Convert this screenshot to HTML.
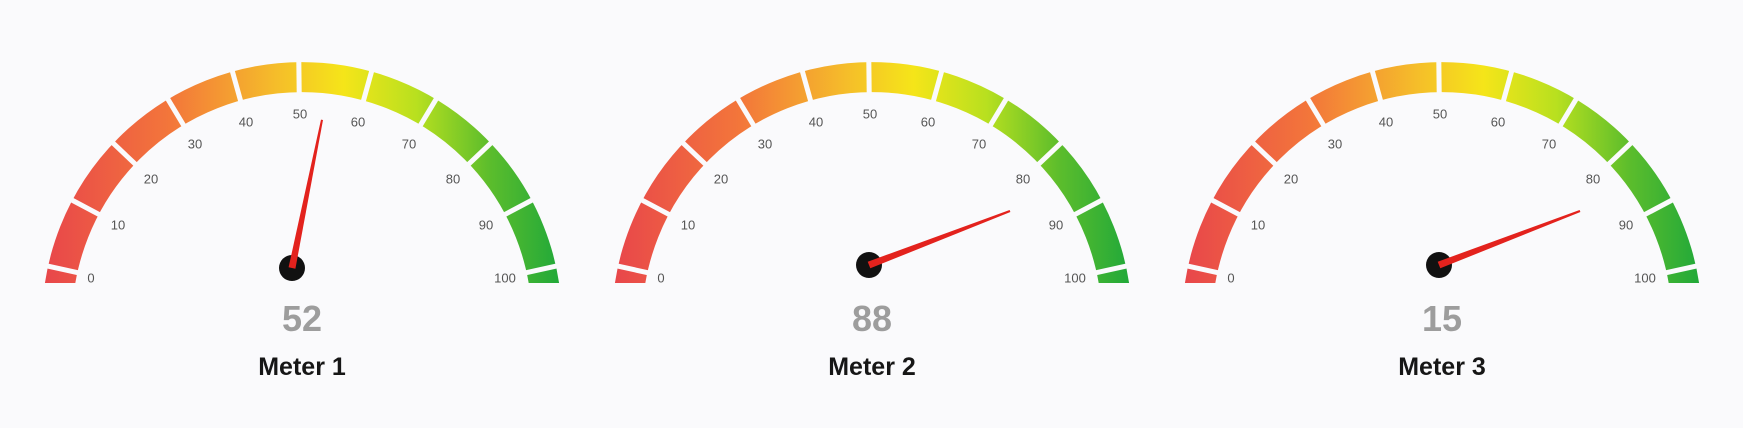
<!DOCTYPE html>
<html><head><meta charset="utf-8"><style>
html,body{margin:0;padding:0;background:#fafafc;}
svg{display:block;}
</style></head><body>
<svg width="1743" height="428" viewBox="0 0 1743 428" xmlns="http://www.w3.org/2000/svg" font-family="Liberation Sans, sans-serif">
<defs>
<linearGradient id="gr" gradientUnits="userSpaceOnUse" x1="-260" y1="0" x2="260" y2="0">
<stop offset="0" stop-color="#e8454b"/>
<stop offset="0.25" stop-color="#f3773a"/>
<stop offset="0.45" stop-color="#f5bd2a"/>
<stop offset="0.58" stop-color="#f5e519"/>
<stop offset="0.72" stop-color="#b8e01f"/>
<stop offset="0.86" stop-color="#5cbd2c"/>
<stop offset="1" stop-color="#1fa83a"/>
</linearGradient>
<clipPath id="cp" clipPathUnits="userSpaceOnUse"><rect x="-300" y="-300" width="600" height="261"/></clipPath>
<g id="arc">
<g clip-path="url(#cp)">
<path d="M -245 0 A 245 245 0 0 1 245 0" fill="none" stroke="url(#gr)" stroke-width="30"/>
<g stroke="#fafafc" stroke-width="5">
<line x1="-272" y1="0" x2="-222" y2="0" transform="rotate(12.4)"/>
<line x1="-272" y1="0" x2="-222" y2="0" transform="rotate(27.92)"/>
<line x1="-272" y1="0" x2="-222" y2="0" transform="rotate(43.44)"/>
<line x1="-272" y1="0" x2="-222" y2="0" transform="rotate(58.96)"/>
<line x1="-272" y1="0" x2="-222" y2="0" transform="rotate(74.48)"/>
<line x1="-272" y1="0" x2="-222" y2="0" transform="rotate(89.3)"/>
<line x1="-272" y1="0" x2="-222" y2="0" transform="rotate(105.52)"/>
<line x1="-272" y1="0" x2="-222" y2="0" transform="rotate(121.04)"/>
<line x1="-272" y1="0" x2="-222" y2="0" transform="rotate(136.56)"/>
<line x1="-272" y1="0" x2="-222" y2="0" transform="rotate(152.08)"/>
<line x1="-272" y1="0" x2="-222" y2="0" transform="rotate(167.6)"/>
</g>
</g>
<g fill="#555" font-size="13" text-anchor="middle" dominant-baseline="central">
<text x="-211" y="-44">0</text>
<text x="-184" y="-97">10</text>
<text x="-151" y="-143">20</text>
<text x="-107" y="-178">30</text>
<text x="-56" y="-200">40</text>
<text x="-2" y="-208">50</text>
<text x="56" y="-200">60</text>
<text x="107" y="-178">70</text>
<text x="151" y="-143">80</text>
<text x="184" y="-97">90</text>
<text x="203" y="-44">100</text>
</g>
</g>
</defs>

<g transform="translate(302,322)">
<use href="#arc"/>
<circle cx="-10" cy="-54" r="13" fill="#111"/>
<polygon points="-6.6,-53.3 -13.4,-54.7 19,-202.4 21,-202" fill="#e3221d"/>
<text x="0" y="9" text-anchor="middle" font-size="36" font-weight="bold" fill="#9d9d9d">52</text>
<text x="0" y="53" text-anchor="middle" font-size="25" font-weight="bold" fill="#161616">Meter 1</text>
</g>

<g transform="translate(872,322)">
<use href="#arc"/>
<circle cx="-3" cy="-57" r="13" fill="#111"/>
<polygon points="-1.7,-53.7 -4.3,-60.3 137.6,-112 138.4,-110" fill="#e3221d"/>
<text x="0" y="9" text-anchor="middle" font-size="36" font-weight="bold" fill="#9d9d9d">88</text>
<text x="0" y="53" text-anchor="middle" font-size="25" font-weight="bold" fill="#161616">Meter 2</text>
</g>

<g transform="translate(1442,322)">
<use href="#arc"/>
<circle cx="-3" cy="-57" r="13" fill="#111"/>
<polygon points="-1.7,-53.7 -4.3,-60.3 137.6,-112 138.4,-110" fill="#e3221d"/>
<text x="0" y="9" text-anchor="middle" font-size="36" font-weight="bold" fill="#9d9d9d">15</text>
<text x="0" y="53" text-anchor="middle" font-size="25" font-weight="bold" fill="#161616">Meter 3</text>
</g>
</svg>
</body></html>
